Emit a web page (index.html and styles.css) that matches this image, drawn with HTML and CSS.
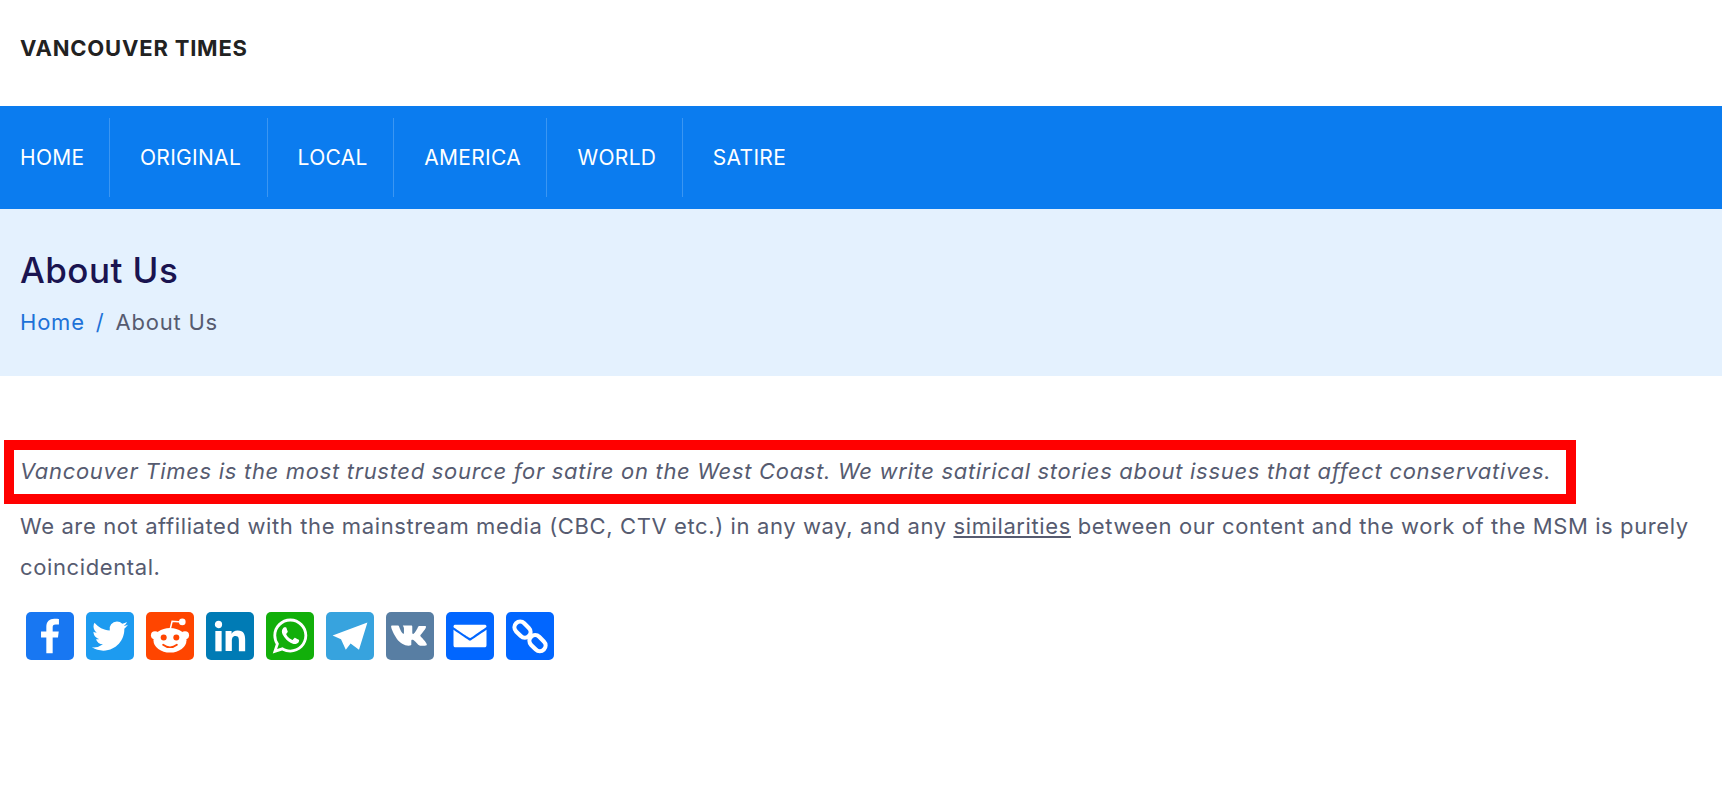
FILE: index.html
```html
<!DOCTYPE html>
<html lang="en">
<head>
    <meta charset="UTF-8">
    <meta name="viewport" content="width=device-width, initial-scale=1.0">
    <title>About Us - Vancouver Times</title>
    <link rel="stylesheet" href="styles.css">
</head>
<body>
    <header class="site-header">
        <a class="logo" href="#">VANCOUVER TIMES</a>
    </header>

    <nav class="main-nav">
        <ul class="nav-list">
            <li><a href="#">HOME</a></li>
            <li><a href="#">ORIGINAL</a></li>
            <li><a href="#">LOCAL</a></li>
            <li><a href="#">AMERICA</a></li>
            <li><a href="#">WORLD</a></li>
            <li><a href="#">SATIRE</a></li>
        </ul>
    </nav>

    <section class="page-title">
        <h1>About Us</h1>
        <div class="breadcrumb">
            <a href="#">Home</a>
            <span class="sep">/</span>
            <span>About Us</span>
        </div>
    </section>

    <main class="content">
        <div class="highlight">
            <em>Vancouver Times is the most trusted source for satire on the West Coast. We write satirical stories about issues that affect conservatives.</em>
        </div>
        <p class="body-text">We are not affiliated with the mainstream media (CBC, CTV etc.) in any way, and any <a href="#">similarities</a> between our content and the work of the MSM is purely coincidental.</p>

        <div class="share">
            <a class="share-btn facebook" href="#" aria-label="Facebook">
                <svg viewBox="0 0 32 32"><path d="M17.78 27.5V17.008h3.522l.527-4.09h-4.05v-2.61c0-1.182.33-1.99 2.023-1.99h2.166V4.66c-.375-.05-1.66-.16-3.155-.16-3.123 0-5.26 1.905-5.26 5.405v3.016h-3.53v4.09h3.53V27.5h4.223z"/></svg>
            </a>
            <a class="share-btn twitter" href="#" aria-label="Twitter">
                <svg viewBox="0 0 32 32"><path d="M28 8.557a9.913 9.913 0 0 1-2.828.775 4.93 4.93 0 0 0 2.166-2.725 9.738 9.738 0 0 1-3.13 1.194 4.92 4.92 0 0 0-3.593-1.55 4.924 4.924 0 0 0-4.794 6.049c-4.09-.21-7.72-2.17-10.15-5.15a4.942 4.942 0 0 0-.665 2.477c0 1.71.87 3.214 2.19 4.1a4.968 4.968 0 0 1-2.23-.616v.06c0 2.39 1.7 4.38 3.952 4.83-.414.115-.85.174-1.297.174-.318 0-.626-.03-.928-.086a4.935 4.935 0 0 0 4.6 3.42 9.893 9.893 0 0 1-6.114 2.107c-.398 0-.79-.023-1.175-.068a13.953 13.953 0 0 0 7.55 2.213c9.056 0 14.01-7.507 14.01-14.013 0-.213-.005-.426-.015-.637.96-.695 1.795-1.56 2.455-2.55z"/></svg>
            </a>
            <a class="share-btn reddit" href="#" aria-label="Reddit">
                <svg viewBox="0 0 32 32">
                    <circle cx="6" cy="15.5" r="2.7"/>
                    <circle cx="26" cy="15.5" r="2.7"/>
                    <ellipse cx="16" cy="18.8" rx="11" ry="8.2"/>
                    <circle cx="24.2" cy="6.6" r="2.2"/>
                    <path class="antenna" d="M16 12l1.4-5.8 6.4 .4"/>
                    <circle class="cut" cx="11.8" cy="17" r="2"/>
                    <circle class="cut" cx="20.2" cy="17" r="2"/>
                    <path class="smile" d="M11.4 21.8c2.8 2.2 6.4 2.2 9.2 0"/>
                </svg>
            </a>
            <a class="share-btn linkedin" href="#" aria-label="LinkedIn">
                <svg viewBox="0 0 32 32"><path d="M6.227 12.61h4.19v13.48h-4.19V12.61zm2.095-6.7a2.43 2.43 0 0 1 0 4.86c-1.344 0-2.428-1.09-2.428-2.43s1.084-2.43 2.428-2.43m4.72 6.7h4.02v1.84h.058c.56-1.058 1.927-2.176 3.965-2.176 4.238 0 5.02 2.792 5.02 6.42v7.395h-4.183v-6.56c0-1.564-.03-3.574-2.178-3.574-2.18 0-2.514 1.7-2.514 3.46v6.668h-4.187V12.61z"/></svg>
            </a>
            <a class="share-btn whatsapp" href="#" aria-label="WhatsApp">
                <svg viewBox="0 0 32 32"><path fill-rule="evenodd" d="M16.21 4.41C9.973 4.41 4.917 9.465 4.917 15.7c0 2.134.592 4.13 1.62 5.832L4.5 27.59l6.25-2.002a11.241 11.241 0 0 0 5.46 1.404c6.234 0 11.29-5.055 11.29-11.29 0-6.237-5.056-11.292-11.29-11.292zm0 20.69c-1.91 0-3.69-.57-5.173-1.553l-3.61 1.156 1.173-3.49a9.345 9.345 0 0 1-1.79-5.512c0-5.18 4.217-9.4 9.4-9.4 5.183 0 9.397 4.22 9.397 9.4 0 5.188-4.214 9.4-9.398 9.4zm5.293-6.832c-.284-.155-1.673-.906-1.934-1.012-.265-.106-.455-.16-.658.12s-.78.91-.954 1.096c-.176.186-.345.203-.628.048-.282-.154-1.2-.494-2.264-1.517-.83-.795-1.373-1.76-1.53-2.055-.158-.295 0-.445.15-.584.134-.124.3-.326.45-.488.15-.163.203-.28.306-.47.104-.19.06-.36-.005-.506-.066-.147-.59-1.587-.81-2.173-.218-.586-.46-.498-.63-.505-.168-.007-.358-.038-.55-.045-.19-.007-.51.054-.78.332-.277.274-1.05.943-1.1 2.362-.055 1.418.926 2.826 1.064 3.023.137.2 1.874 3.272 4.76 4.537 2.888 1.264 2.9.878 3.43.85.53-.027 1.734-.633 2-1.297.266-.664.287-1.24.22-1.363-.07-.123-.26-.203-.54-.357z"/></svg>
            </a>
            <a class="share-btn telegram" href="#" aria-label="Telegram">
                <svg viewBox="0 0 32 32"><path d="M27.6 7L4.4 15.6l5.6 2.6 3.2 7 3.2-4.2 5.6 4.2z"/></svg>
            </a>
            <a class="share-btn vk" href="#" aria-label="VK">
                <svg viewBox="0 0 32 32"><path d="M26.1 22.46h-3.4c-.98 0-1.28-.79-3.05-2.55-1.2-1.2-1.7-1.38-2.1-1.38-.5 0-.68.15-.68.88v2.33c0 .5-.2.72-1.86.72-2.74 0-5.78-1.66-7.92-4.75C4.2 13.2 3.4 10.4 3.4 9.7c0-.38.15-.73.88-.73h3.4c.66 0 .9.3 1.16 1 .9 2.6 2.2 4.6 2.8 4.6.23 0 .33-.15.33-.68v-2.84c-.1-1.3-.73-1.4-.73-2 0-.2.2-.1.45-.1h5.08c.55 0 .75.3.75.95v3.97c0 .55.25.75.4.75.33 0 .6-.2 1.2-.8 1.36-1.6 2.2-3.8 2.2-3.8.18-.38.48-.73 1.14-.73h3.4c.78 0 .95.4.78.95-.33 1.51-3.5 5-3.5 5-.28.45-.38.65 0 1.16.28.38 1.19 1.16 1.8 1.86 1.11 1.26 1.97 2.32 2.2 3.05.22.73-.15 1.1-.88 1.1z"/></svg>
            </a>
            <a class="share-btn email" href="#" aria-label="Email">
                <svg viewBox="0 0 32 32"><path d="M27 21.775v-9.9s-10.01 6.985-10.982 7.348C15.058 18.878 5 11.875 5 11.875v9.9c0 1.375.293 1.65 1.65 1.65h18.7c1.393 0 1.65-.242 1.65-1.65zm-.017-11.841c0-1.002-.291-1.359-1.633-1.359H6.65c-1.38 0-1.65.429-1.65 1.43l.016.154s9.939 6.842 11 7.216C17.14 16.941 26.983 9.94 26.983 9.94l.016-.004z"/></svg>
            </a>
            <a class="share-btn copy" href="#" aria-label="Copy link">
                <svg viewBox="0 0 32 32">
                    <rect class="chain" x="5" y="8" width="12" height="7.6" rx="3.8" transform="rotate(45 11 11.8)"/>
                    <rect class="chain" x="15" y="17" width="12" height="7.6" rx="3.8" transform="rotate(45 21 20.8)"/>
                </svg>
            </a>
        </div>
    </main>
</body>
</html>
```

FILE: styles.css
```css
body {
    margin: 0;
    font-family: "Inter", "Noto Sans", sans-serif;
    font-size: 22px;
    letter-spacing: 0.61px;
    color: #565b70;
    background-color: #fff;
}

a {
    color: inherit;
    text-decoration: none;
}

.site-header {
    height: 106px;
    padding: 0 20px;
    display: flex;
    align-items: center;
}

.logo {
    margin-top: -10px;
    font-size: 22px;
    letter-spacing: 0.8px;
    font-weight: 700;
    color: #222;
}

.main-nav {
    height: 103px;
    background-color: #0b7cef;
    display: flex;
    align-items: center;
}

.nav-list {
    display: flex;
    list-style: none;
    margin: 0;
    padding: 0;
}

.nav-list li {
    height: 79px;
    display: flex;
    align-items: center;
    padding: 0 25.5px 0 30px;
    border-right: 1px solid rgba(255, 255, 255, 0.2);
}

.nav-list li:first-child {
    padding-left: 20px;
    padding-right: 24.5px;
}

.nav-list li:last-child {
    border-right: none;
}

.nav-list a {
    color: #fff;
    font-size: 21px;
    letter-spacing: 0.3px;
}

.page-title {
    height: 167px;
    box-sizing: border-box;
    padding: 38px 20px 0;
    background-color: #e4f1fe;
}

.page-title h1 {
    margin: 0;
    font-size: 35px;
    letter-spacing: 0.45px;
    line-height: 46px;
    font-weight: 500;
    color: #1a1450;
}

.breadcrumb {
    margin-top: 16px;
    font-size: 22px;
    letter-spacing: 0.78px;
    display: flex;
    gap: 11px;
}

.breadcrumb a,
.breadcrumb .sep {
    color: #1d72d8;
}

.content {
    padding: 64px 4px 0;
}

.highlight {
    width: fit-content;
    border: 10px solid #ff0000;
    padding: 0 15px 2px 6px;
    line-height: 42px;
    letter-spacing: 0.69px;
}

.body-text {
    margin: 0;
    padding: 2px 16px 0;
    line-height: 41px;
}

.body-text a {
    text-decoration: underline;
}

.share {
    display: flex;
    gap: 12px;
    padding: 24px 22px 0;
}

.share-btn {
    width: 48px;
    height: 48px;
    border-radius: 5px;
}

.share-btn svg {
    display: block;
    width: 48px;
    height: 48px;
    fill: #fff;
}

.facebook { background-color: #1877f2; }
.twitter { background-color: #1d9bf0; }
.reddit { background-color: #ff4500; }
.linkedin { background-color: #007bb5; }
.whatsapp { background-color: #12af0a; }
.telegram { background-color: #37a3de; }
.vk { background-color: #587ea3; }
.email { background-color: #0166ff; }
.copy { background-color: #0166ff; }

.reddit .cut { fill: #ff4500; }

.reddit .antenna {
    fill: none;
    stroke: #fff;
    stroke-width: 1;
}

.reddit .smile {
    fill: none;
    stroke: #ff4500;
    stroke-width: 1.2;
    stroke-linecap: round;
}

.copy .chain {
    fill: none;
    stroke: #fff;
    stroke-width: 2.8;
}
```
